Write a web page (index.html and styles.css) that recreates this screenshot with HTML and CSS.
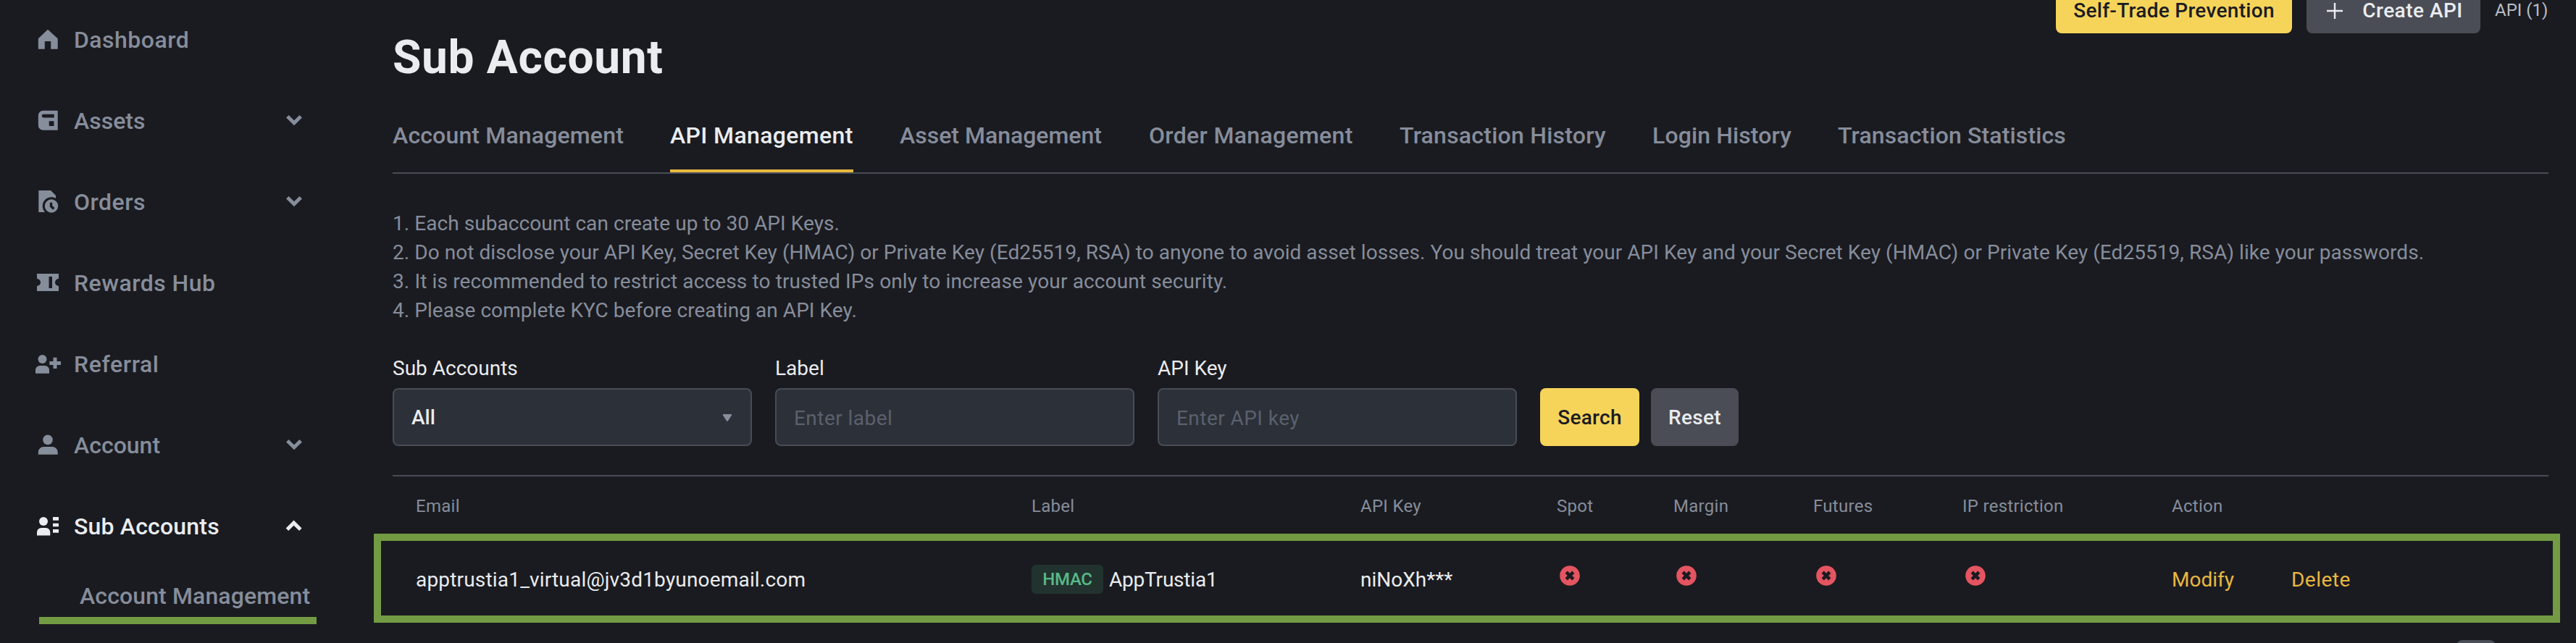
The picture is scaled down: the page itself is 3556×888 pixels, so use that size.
FILE: index.html
```
<!DOCTYPE html>
<html lang="en">
<head>
<meta charset="utf-8">
<title>Sub Account</title>
<link rel="stylesheet" href="styles.css">
</head>
<body>
<div class="page">
  <nav class="sidebar">
    <a class="nav-item"><svg class="icon" viewBox="0 0 36 36"><path d="M18 3.8 31.7 16.3V30.7H22.2V20H13.8V30.7H4.8V16.3Z"/></svg><span class="ls-4">Dashboard</span></a>
    <a class="nav-item"><svg class="icon" viewBox="0 0 36 36"><path fill-rule="evenodd" d="M11.5 3.8H31.7V30.7H11.5A6.7 6.7 0 0 1 4.8 24V10.5A6.7 6.7 0 0 1 11.5 3.8ZM12 8.8A2.3 2.3 0 0 0 12 13.4H26.8V8.8ZM19.7 18.3V25H26.5V18.3Z"/></svg><span>Assets</span><svg class="chevron" viewBox="0 0 24 24"><path d="M2.8 5.7 12 14.8 21.2 5.7"/></svg></a>
    <a class="nav-item"><svg class="icon" viewBox="0 0 36 36"><path d="M5.3 2H22L29 9V32H5.3Z"/><circle class="cut" cx="23" cy="23.5" r="12.3"/><circle cx="23" cy="23.5" r="9.2"/><path class="cut-line" d="M22.5 18.7V23.7L26.3 27.5"/></svg><span class="ls-4">Orders</span><svg class="chevron" viewBox="0 0 24 24"><path d="M2.8 5.7 12 14.8 21.2 5.7"/></svg></a>
    <a class="nav-item"><svg class="icon" viewBox="0 0 36 36"><path fill-rule="evenodd" d="M3 5H33V12A5 5 0 0 0 33 22V29H3V22A5 5 0 0 0 3 12ZM19.5 9V25H24V9Z"/></svg><span class="ls-4">Rewards Hub</span></a>
    <a class="nav-item"><svg class="icon" viewBox="0 0 36 36"><circle cx="10.5" cy="11" r="6"/><path d="M1 30.7V26A6 6 0 0 1 7 20H14A6 6 0 0 1 20 26V30.7ZM25.5 8.7H30.5V14H36V19H30.5V24H25.5V19H20.3V14H25.5Z"/></svg><span class="ls-5">Referral</span></a>
    <a class="nav-item"><svg class="icon" viewBox="0 0 36 36"><circle cx="18" cy="10.4" r="6.8"/><path d="M4.8 30.7V27.5A7.5 7.5 0 0 1 12.3 20H24.2A7.5 7.5 0 0 1 31.7 27.5V30.7Z"/></svg><span>Account</span><svg class="chevron" viewBox="0 0 24 24"><path d="M2.8 5.7 12 14.8 21.2 5.7"/></svg></a>
    <a class="nav-item active"><svg class="icon" viewBox="0 0 36 36"><circle cx="12" cy="11" r="6"/><path d="M3 30.5V26A6 6 0 0 1 9 20H15.3A6 6 0 0 1 21.3 26V30.5ZM25 5H33V9.7H25ZM25 13.7H33V18.3H25ZM25 22H33V26.7H25Z"/></svg><span class="ls-2">Sub Accounts</span><svg class="chevron" viewBox="0 0 24 24"><path d="M2.4 16.2 11.6 7.1 20.8 16.2"/></svg></a>
    <a class="nav-sub">Account Management<i class="mark"></i></a>
  </nav>

  <main class="main">
    <header class="header">
      <h1 class="title">Sub Account</h1>
      <div class="actions">
        <button class="btn top-btn primary w-stp">Self-Trade Prevention</button>
        <button class="btn top-btn secondary w-create"><svg class="plus" viewBox="0 0 24 24"><path d="M12 1V23M1 12H23"/></svg><span class="ls-4">Create API</span></button>
        <span class="api-count">API (1)</span>
      </div>
    </header>

    <div class="tabs">
      <a class="tab t-account">Account Management</a>
      <a class="tab t-api current">API Management</a>
      <a class="tab t-asset">Asset Management</a>
      <a class="tab t-order">Order Management</a>
      <a class="tab t-trans">Transaction History</a>
      <a class="tab t-login">Login History</a>
      <a class="tab t-stats">Transaction Statistics</a>
    </div>

    <div class="notes">
      <p>1. Each subaccount can create up to 30 API Keys.</p>
      <p>2. Do not disclose your API Key, Secret Key (HMAC) or Private Key (Ed25519, RSA) to anyone to avoid asset losses. You should treat your API Key and your Secret Key (HMAC) or Private Key (Ed25519, RSA) like your passwords.</p>
      <p class="ls-1">3. It is recommended to restrict access to trusted IPs only to increase your account security.</p>
      <p>4. Please complete KYC before creating an API Key.</p>
    </div>

    <div class="filters">
      <div class="field"><label>Sub Accounts</label><div class="box select"><span>All</span><svg class="caret" viewBox="0 0 12 10"><path d="M0 0H12V1.5L7 9.3Q6 10.3 5 9.3L0 1.5Z"/></svg></div></div>
      <div class="field"><label>Label</label><div class="box hint">Enter label</div></div>
      <div class="field"><label>API Key</label><div class="box hint">Enter API key</div></div>
      <div class="buttons">
        <button class="btn primary w-search">Search</button>
        <button class="btn secondary w-reset">Reset</button>
      </div>
    </div>

    <section class="table">
      <div class="row head">
        <span>Email</span><span>Label</span><span>API Key</span><span>Spot</span><span>Margin</span><span>Futures</span><span>IP restriction</span><span>Action</span>
      </div>
      <div class="row data">
        <span class="cell ls-2">apptrustia1_virtual@jv3d1byunoemail.com</span>
        <span class="label-cell"><b class="badge">HMAC</b><span class="cell key-name">AppTrustia1</span></span>
        <span class="cell">niNoXh***</span>
        <span><svg class="deny" viewBox="0 0 28 28"><circle cx="14" cy="14" r="13.8"/><path d="M9.2 9.2 18.8 18.8M18.8 9.2 9.2 18.8"/></svg></span>
        <span><svg class="deny" viewBox="0 0 28 28"><circle cx="14" cy="14" r="13.8"/><path d="M9.2 9.2 18.8 18.8M18.8 9.2 9.2 18.8"/></svg></span>
        <span><svg class="deny" viewBox="0 0 28 28"><circle cx="14" cy="14" r="13.8"/><path d="M9.2 9.2 18.8 18.8M18.8 9.2 9.2 18.8"/></svg></span>
        <span><svg class="deny" viewBox="0 0 28 28"><circle cx="14" cy="14" r="13.8"/><path d="M9.2 9.2 18.8 18.8M18.8 9.2 9.2 18.8"/></svg></span>
        <span class="cell links"><a class="link-modify">Modify</a><a class="ls-4">Delete</a></span>
      </div>
      <i class="highlight"></i>
    </section>
    <div class="pager"><span class="page-current"></span></div>
  </main>
</div>
</body>
</html>
```
FILE: styles.css
```
* { box-sizing: border-box; }
body {
  margin: 0;
  background: #1a1b20;
  color: #eaecef;
  font-family: Roboto, "Liberation Sans", sans-serif;
  font-size: 28px;
  line-height: 40px;
}
.page { display: flex; width: 3556px; height: 888px; overflow: hidden; }
.ls-1 { letter-spacing: 0.13px; }
.ls-2 { letter-spacing: 0.18px; }
.ls-4 { letter-spacing: 0.48px; }
.ls-5 { letter-spacing: 0.6px; }

/* Sidebar */
.sidebar {
  width: 542px;
  flex: none;
  margin-top: -1px;
  font-size: 32px;
  font-weight: 500;
  color: #868d9b;
}
.nav-item { display: flex; align-items: center; height: 112px; padding: 0 124px 0 48px; }
.nav-item span { flex: 1; margin-left: 18px; }
.nav-item.active { color: #eaecef; }
.icon { width: 36px; height: 36px; fill: currentColor; flex: none; }
.icon .cut { fill: #1a1b20; }
.icon .cut-line { fill: none; stroke: #1a1b20; stroke-width: 3.4; }
.chevron { width: 24px; height: 24px; fill: none; stroke: currentColor; stroke-width: 5; flex: none; }
.nav-sub { display: block; position: relative; height: 80px; padding-left: 110px; line-height: 80px; letter-spacing: 0.12px; }
.mark { position: absolute; left: 54px; top: 69px; width: 383px; height: 10px; background: #729b44; }

/* Header */
.main { width: 2976px; flex: none; }
.header { display: flex; justify-content: space-between; align-items: flex-start; height: 120px; }
.title { margin: 40px 0 0; font-size: 64px; line-height: 80px; font-weight: 700; letter-spacing: 0.65px; }
.actions { display: flex; align-items: center; gap: 20px; margin-top: -18px; line-height: 28px; }
.btn {
  display: flex;
  align-items: center;
  justify-content: center;
  height: 80px;
  padding: 0;
  border: 0;
  border-radius: 8px;
  font: 500 28px/28px Roboto, "Liberation Sans", sans-serif;
  letter-spacing: 0.3px;
}
.primary { background: #f6d45a; color: #1b1c21; }
.secondary { background: #4a4d56; color: #eaecef; }
.top-btn { height: 64px; padding-top: 1px; }
.w-stp { width: 326px; }
.w-create { width: 240px; gap: 26px; padding-left: 3px; }
.w-search { width: 137px; padding-top: 1px; }
.w-reset { width: 121px; padding-top: 1px; }
.plus { width: 24px; height: 24px; fill: none; stroke: currentColor; stroke-width: 2.4; }
.api-count { width: 74px; font-size: 24px; color: #b7bdc6; white-space: nowrap; }

/* Tabs */
.tabs { display: flex; gap: 64px; height: 120px; border-bottom: 2px solid #474d57; font-size: 32px; font-weight: 500; color: #868d9b; }
.tab { height: 118px; padding-top: 47px; white-space: nowrap; }
.tab.current { color: #eaecef; border-bottom: 4px solid #e8b840; }
.t-account { width: 319px; letter-spacing: 0.16px; }
.t-api { width: 253px; letter-spacing: 0.36px; }
.t-asset { width: 280px; }
.t-order { width: 282px; letter-spacing: 0.32px; }
.t-trans { width: 285px; letter-spacing: 0.24px; }
.t-login { width: 192px; letter-spacing: 0.11px; }
.t-stats { width: 316px; letter-spacing: 0.14px; }

/* Notes */
.notes { margin-top: 49px; color: #868d9b; white-space: nowrap; }
.notes p { margin: 0; }
.notes p:not(.ls-1) { letter-spacing: 0.055px; }

/* Filters */
.filters { display: flex; align-items: flex-end; gap: 32px; margin-top: 40px; }
.field { width: 496px; }
.field label { display: block; margin-bottom: 7px; }
.box {
  display: flex;
  align-items: center;
  height: 80px;
  padding: 1px 24px 0;
  border: 2px solid #474c55;
  border-radius: 8px;
  background: #2c3038;
}
.select { justify-content: space-between; padding-right: 26px; font-weight: 500; }
.hint { padding-top: 3px; color: #5b606d; letter-spacing: 0.45px; }
.caret { width: 12px; height: 10px; fill: #868d9b; }
.buttons { display: flex; gap: 16px; }

/* Table */
.table { position: relative; margin-top: 40px; border-top: 2px solid #474c55; }
.row {
  display: grid;
  grid-template-columns: 850px 454px 271px 161px 193px 206px 289px 1fr;
  align-items: center;
  padding-left: 32px;
  white-space: nowrap;
}
.head { height: 82px; font-size: 24px; color: #868d9b; letter-spacing: 0.28px; }
.data { height: 120px; }
.cell { padding-top: 2px; }
.label-cell { display: flex; align-items: center; gap: 8px; }
.key-name { letter-spacing: -0.2px; }
.badge {
  width: 99px;
  height: 40px;
  border-radius: 6px;
  background: #22332f;
  color: #58b987;
  font-size: 24px;
  font-weight: 500;
  letter-spacing: -0.3px;
  text-align: center;
}
.deny { display: block; width: 28px; height: 28px; margin: 0 0 10px 4px; }
.deny circle { fill: #e45561; }
.deny path { fill: none; stroke: #1a1b20; stroke-width: 4.6; }
.links { display: flex; color: #e8b840; }
.link-modify { width: 165px; }
.highlight { position: absolute; left: -26px; top: 79px; width: 3018px; height: 123px; border: 10px solid #729b44; }

/* Pagination */
.pager { display: flex; justify-content: flex-end; padding: 24px 73px 0 0; }
.page-current { width: 54px; height: 54px; border-radius: 8px; background: #4a4d56; }
```
